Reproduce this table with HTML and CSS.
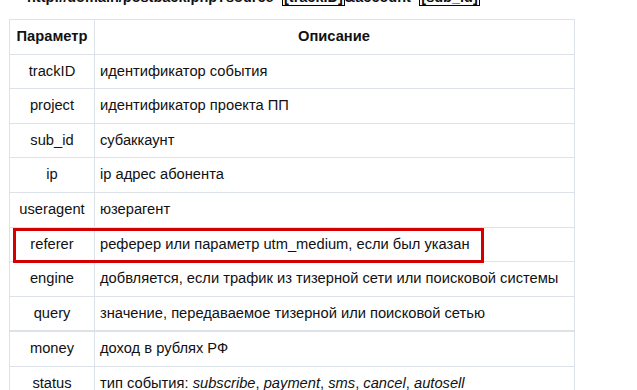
FILE: index.html
```html
<!DOCTYPE html>
<html>
<head>
<meta charset="utf-8">
<link rel="stylesheet" href="styles.css">
</head>
<body>
<div class="page">
  <p class="url">http://domain/postback.php?source=<span class="ph">[trackID]</span>&amp;account=<span class="ph">[sub_id]</span></p>
  <div class="wrap">
    <table class="params">
      <thead>
        <tr><th class="c1">Параметр</th><th class="c2">Описание</th></tr>
      </thead>
      <tbody>
        <tr><td class="c1">trackID</td><td>идентификатор события</td></tr>
        <tr><td class="c1">project</td><td>идентификатор проекта ПП</td></tr>
        <tr><td class="c1">sub_id</td><td>субаккаунт</td></tr>
        <tr><td class="c1">ip</td><td>ip адрес абонента</td></tr>
        <tr><td class="c1">useragent</td><td>юзерагент</td></tr>
        <tr><td class="c1">referer</td><td>реферер или параметр utm_medium, если был указан</td></tr>
        <tr><td class="c1">engine</td><td>добвляется, если трафик из тизерной сети или поисковой системы</td></tr>
        <tr><td class="c1">query</td><td>значение, передаваемое тизерной или поисковой сетью</td></tr>
        <tr class="sep"><td class="c1">money</td><td>доход в рублях РФ</td></tr>
        <tr><td class="c1">status</td><td>тип события: <i>subscribe</i>, <i>payment</i>, <i>sms</i>, <i>cancel</i>, <i>autosell</i></td></tr>
      </tbody>
    </table>
    <div class="highlight"></div>
  </div>
</div>
</body>
</html>
```
FILE: styles.css
```css
html, body {
  margin: 0;
  padding: 0;
  background: #fff;
}
body {
  font-family: "Liberation Sans", Arial, sans-serif;
  font-size: 14.7px;
  color: #111;
  overflow: hidden;
}
.page {
  padding-left: 9px;
}
.url {
  margin: -11px 0 0 18px;
  font-weight: bold;
  font-size: 14.5px;
  line-height: 16px;
  white-space: nowrap;
}
.ph {
  border: 1px solid #000;
  padding: 0 1px;
}
.wrap {
  position: relative;
  width: 566px;
  margin-top: 14px;
}
.params {
  border-collapse: collapse;
  width: 566px;
  table-layout: fixed;
}
.params th, .params td {
  border: 1px solid #dde2e8;
  padding: 8px 6px 8px 5px;
  line-height: 17.6px;
  text-align: left;
  white-space: nowrap;
}
.params th {
  font-weight: bold;
  text-align: center;
}
.params .c1 {
  width: 78px;
  text-align: center;
  padding-left: 3px;
  padding-right: 3px;
}
.params tr.sep td {
  border-top: 2px solid #dde2e8;
}
.highlight {
  position: absolute;
  left: 4px;
  top: 209px;
  width: 465px;
  height: 29px;
  border: 3px solid #d40000;
}
```
